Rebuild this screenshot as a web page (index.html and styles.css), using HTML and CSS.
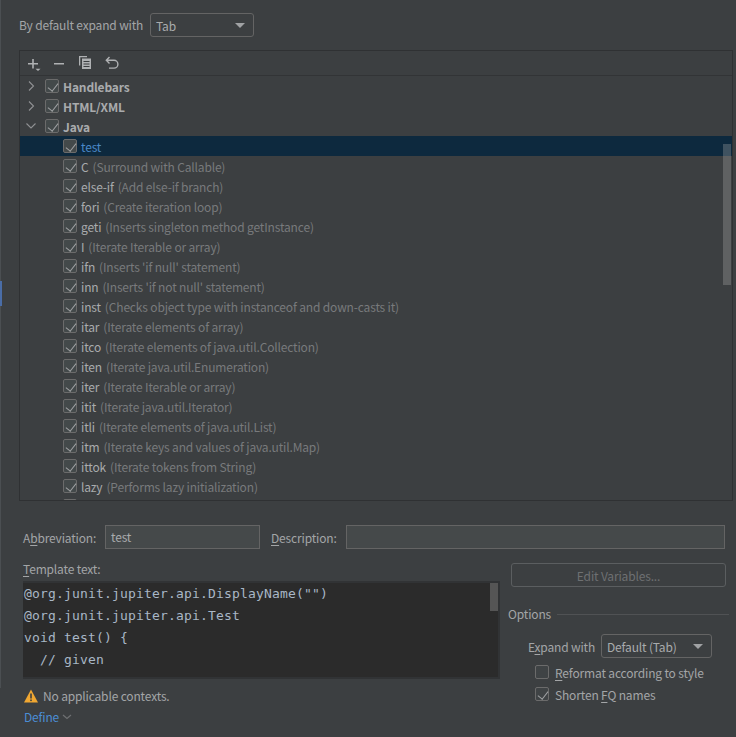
FILE: index.html
```html
<!DOCTYPE html>
<html>
<head>
<meta charset="utf-8">
<title>Live Templates</title>
<link rel="stylesheet" href="styles.css">
</head>
<body>
<div class="edge"></div>
<div class="edge-mark"></div>
<div class="page">
  <div class="top-row">
    <span class="label by-label">By default expand with</span>
    <div class="combo combo-tab"><span>Tab</span><i class="caret"></i></div>
  </div>
  <div class="tree-panel">
    <div class="toolbar">
      <svg class="tool" width="16" height="16" viewBox="0 0 16 16"><path d="M6.200 3h1.600v4h4.200v1.600H7.800v4H6.200V8.600H2V7h4.200z" fill="#afb1b3"/><path d="M9.500 12.800h5L12 15z" fill="#afb1b3"/></svg>
      <svg class="tool" width="16" height="16" viewBox="0 0 16 16"><rect x="2" y="7" width="10" height="1.500" fill="#afb1b3"/></svg>
      <svg class="tool" width="16" height="16" viewBox="0 0 16 16"><path d="M1 0h8v1.300H2.300V9.500H1z" fill="#afb1b3"/><path d="M4 2.500h9V13H4z" fill="#afb1b3"/><path d="M5.500 5h6v1h-6zM5.500 7.500h6v1h-6zM5.500 10h6v1h-6z" fill="#3c3f41"/></svg>
      <svg class="tool" width="16" height="16" viewBox="0 0 16 16"><path d="M5.500 1 2.300 4.300 5.500 7.500M2.800 4.300H10a3.900 3.900 0 0 1 0 7.800H5" fill="none" stroke="#afb1b3" stroke-width="1.400"/></svg>
    </div>
    <div class="tree">
      <div class="row group"><svg class="arrow" width="12" height="12" viewBox="0 0 12 12"><path d="M4 1.500 8.500 6 4 10.500" fill="none" stroke="#8f9193" stroke-width="1.100"/></svg><span class="cb on"></span><b>Handlebars</b></div>
      <div class="row group"><svg class="arrow" width="12" height="12" viewBox="0 0 12 12"><path d="M4 1.500 8.500 6 4 10.500" fill="none" stroke="#8f9193" stroke-width="1.100"/></svg><span class="cb on"></span><b>HTML/XML</b></div>
      <div class="row group"><svg class="arrow" width="12" height="12" viewBox="0 0 12 12"><path d="M1.500 3.500 6 8l4.500-4.500" fill="none" stroke="#8f9193" stroke-width="1.100"/></svg><span class="cb on"></span><b>Java</b></div>
      <div class="row item selected"><span class="cb on"></span><span class="name">test</span></div>
      <div class="row item"><span class="cb on"></span><span class="name">C</span><span class="desc">(Surround with Callable)</span></div>
      <div class="row item"><span class="cb on"></span><span class="name">else-if</span><span class="desc">(Add else-if branch)</span></div>
      <div class="row item"><span class="cb on"></span><span class="name">fori</span><span class="desc">(Create iteration loop)</span></div>
      <div class="row item"><span class="cb on"></span><span class="name">geti</span><span class="desc">(Inserts singleton method getInstance)</span></div>
      <div class="row item"><span class="cb on"></span><span class="name">I</span><span class="desc">(Iterate Iterable or array)</span></div>
      <div class="row item"><span class="cb on"></span><span class="name">ifn</span><span class="desc">(Inserts 'if null' statement)</span></div>
      <div class="row item"><span class="cb on"></span><span class="name">inn</span><span class="desc">(Inserts 'if not null' statement)</span></div>
      <div class="row item"><span class="cb on"></span><span class="name">inst</span><span class="desc">(Checks object type with instanceof and down-casts it)</span></div>
      <div class="row item"><span class="cb on"></span><span class="name">itar</span><span class="desc">(Iterate elements of array)</span></div>
      <div class="row item"><span class="cb on"></span><span class="name">itco</span><span class="desc">(Iterate elements of java.util.Collection)</span></div>
      <div class="row item"><span class="cb on"></span><span class="name">iten</span><span class="desc">(Iterate java.util.Enumeration)</span></div>
      <div class="row item"><span class="cb on"></span><span class="name">iter</span><span class="desc">(Iterate Iterable or array)</span></div>
      <div class="row item"><span class="cb on"></span><span class="name">itit</span><span class="desc">(Iterate java.util.Iterator)</span></div>
      <div class="row item"><span class="cb on"></span><span class="name">itli</span><span class="desc">(Iterate elements of java.util.List)</span></div>
      <div class="row item"><span class="cb on"></span><span class="name">itm</span><span class="desc">(Iterate keys and values of java.util.Map)</span></div>
      <div class="row item"><span class="cb on"></span><span class="name">ittok</span><span class="desc">(Iterate tokens from String)</span></div>
      <div class="row item"><span class="cb on"></span><span class="name">lazy</span><span class="desc">(Performs lazy initialization)</span></div>
      <div class="row item"><span class="cb"></span></div>
      <div class="scrollbar"></div>
    </div>
  </div>
  <div class="fields">
    <span class="label abbr-label">A<u>b</u>breviation:</span>
    <div class="input abbr">test</div>
    <span class="label desc-label"><u>D</u>escription:</span>
    <div class="input descr"></div>
  </div>
  <div class="bottom">
    <div class="left-col">
      <div class="label tmpl-label"><u>T</u>emplate text:</div>
      <div class="editor">
        <pre class="code">@org.junit.jupiter.api.DisplayName("")
@org.junit.jupiter.api.Test
void test() {
  // given</pre>
        <div class="editor-thumb"></div>
      </div>
      <div class="warn">
        <svg width="14" height="14" viewBox="0 0 14 14"><path d="M7 .5 14 13.500H0z" fill="#f0a732"/><rect x="6.200" y="4.500" width="1.600" height="5" fill="#3c3f41"/><rect x="6.200" y="10.500" width="1.600" height="1.600" fill="#3c3f41"/></svg>
        <span class="label">No applicable contexts.</span>
      </div>
      <div class="define"><span>Define</span><svg width="10" height="10" viewBox="0 0 10 10"><path d="M1 3l4 3.500L9 3" fill="none" stroke="#6e7072" stroke-width="1.200"/></svg></div>
    </div>
    <div class="right-col">
      <div class="btn-disabled">Edit Variables...</div>
      <div class="options-head"><span class="label">Options</span><div class="rule"></div></div>
      <div class="expand-row">
        <span class="label expand-label">E<u>x</u>pand with</span>
        <div class="combo combo-default"><span>Default (Tab)</span><i class="caret"></i></div>
      </div>
      <div class="check-row"><span class="cb"></span><span class="label"><u>R</u>eformat according to style</span></div>
      <div class="check-row"><span class="cb on"></span><span class="label">Shorten <u>F</u>Q names</span></div>
    </div>
  </div>
</div>
</body>
</html>
```
FILE: styles.css
```css
* { box-sizing: border-box; }
html, body { margin: 0; padding: 0; }
body {
  width: 736px;
  height: 737px;
  background: #3c3f41;
  color: #a9abad;
  font: 12px/16px "Noto Sans CJK KR", "Noto Sans", sans-serif;
  letter-spacing: -.16px;
  overflow: hidden;
  position: relative;
}
.edge { position: absolute; left: 0; top: 0; height: 688px; width: 1px; background: #4b4f52; }
.edge-mark { position: absolute; left: 0; top: 281px; height: 25px; width: 2px; background: #4a6da7; }
.page { padding: 13px 7px 0 19px; display: flex; flex-direction: column; }
.label { color: #a3a5a7; white-space: nowrap; }
u { text-underline-offset: 2px; }
.top-row { display: flex; align-items: center; height: 24px; }
.by-label { width: 131px; flex: none; }
.combo {
  height: 24px; border: 1px solid #646464; border-radius: 3px; background: #3c3f41;
  display: flex; align-items: center; justify-content: space-between;
  padding: 0 8px 0 5px; color: #a9abad;
}
.combo span { padding-top: 2px; }
.combo-tab { width: 104px; }
.combo-default { width: 111px; flex: none; }
.caret { width: 0; height: 0; border-left: 5px solid transparent; border-right: 5px solid transparent; border-top: 5px solid #a0a2a4; }
.tree-panel { margin-top: 13px; width: 714px; height: 451px; border: 1px solid #2f3133; display: flex; flex-direction: column; }
.toolbar { height: 25px; flex: none; border-bottom: 1px solid #323436; display: flex; align-items: center; gap: 10px; padding: 1px 0 0 6px; }
.tree { position: relative; flex: 1; overflow: hidden; }
.row { height: 20px; flex: none; display: flex; align-items: center; white-space: nowrap; color: #a9abad; }
.row b { font-weight: 700; color: #a9abad; padding-top: 2px; }
.name { padding-top: 2px; }
.group { padding-left: 5px; }
.arrow { margin-right: 8px; flex: none; }
.group .cb { margin-right: 4px; }
.item { padding-left: 43px; }
.item .cb { margin-right: 4px; }
.desc { color: #787a7c; margin-left: 4px; padding-top: 2px; }
.selected { background: #0d293e; }
.selected .name { color: #4a88c7; }
.cb {
  position: relative; width: 14px; height: 14px; flex: none; border: 1px solid #6b6b6b; border-radius: 2px;
  background: #43494a;
}
.cb.on::after {
  content: ""; position: absolute; left: 3.500px; top: .5px; width: 5px; height: 9px;
  border: solid #a0a2a4; border-width: 0 1.500px 1.500px 0; transform: rotate(38deg);
}
.scrollbar { position: absolute; right: 1px; top: 68px; width: 8px; height: 141px; background: rgba(166,166,166,.33); }
.fields { display: flex; align-items: center; margin-top: 24px; padding-left: 4px; height: 24px; }
.input { height: 24px; border: 1px solid #646464; background: #45494a; padding: 1px 0 0 5px; line-height: 20px; color: #a9abad; flex: none; }
.abbr-label { width: 82px; flex: none; padding-top: 2px; }
.abbr { width: 155px; }
.desc-label { margin-left: 11px; width: 75px; flex: none; padding-top: 2px; }
.descr { width: 379px; }
.bottom { display: flex; margin-top: 12px; }
.left-col { width: 481px; padding-left: 4px; flex: none; }
.tmpl-label { height: 17px; }
.editor { position: relative; width: 477px; height: 98px; background: #2b2b2b; border: 2px solid #313335; border-left: 0; margin-top: 3px; }
.code { margin: 0; padding: 0 0 0 1px; font: 13px/22px "DejaVu Sans Mono", monospace; color: #a9b7c6; letter-spacing: .17px; }
.editor-thumb { position: absolute; right: 0; top: 0; width: 8px; height: 28px; background: #555; }
.warn { display: flex; align-items: center; gap: 5px; margin-top: 9px; height: 16px; padding-left: 1px; }
.define { display: flex; align-items: center; gap: 3px; margin-top: 5px; padding-left: 1px; color: #4b8dd4; }
.right-col { flex: 1; padding-left: 11px; }
.btn-disabled { width: 215px; height: 24px; border: 1px solid #5b5e60; border-radius: 3px; display: flex; align-items: center; justify-content: center; color: #6e7072; margin-top: 2px; padding-top: 2px; }
.options-head { display: flex; align-items: center; gap: 6px; margin-top: 19px; margin-left: -3px; }
.rule { flex: 1; height: 1px; background: #505254; }
.expand-row { display: flex; align-items: center; margin: 12px 0 0 17px; }
.expand-label { width: 73px; flex: none; padding-top: 2px; }
.check-row { display: flex; align-items: center; gap: 6px; margin: 7px 0 0 24px; height: 14px; }
.check-row + .check-row { margin-top: 8px; }
.check-row .label { padding-top: 2px; }
.check-row .cb { background-color: #3f4345; }
```
